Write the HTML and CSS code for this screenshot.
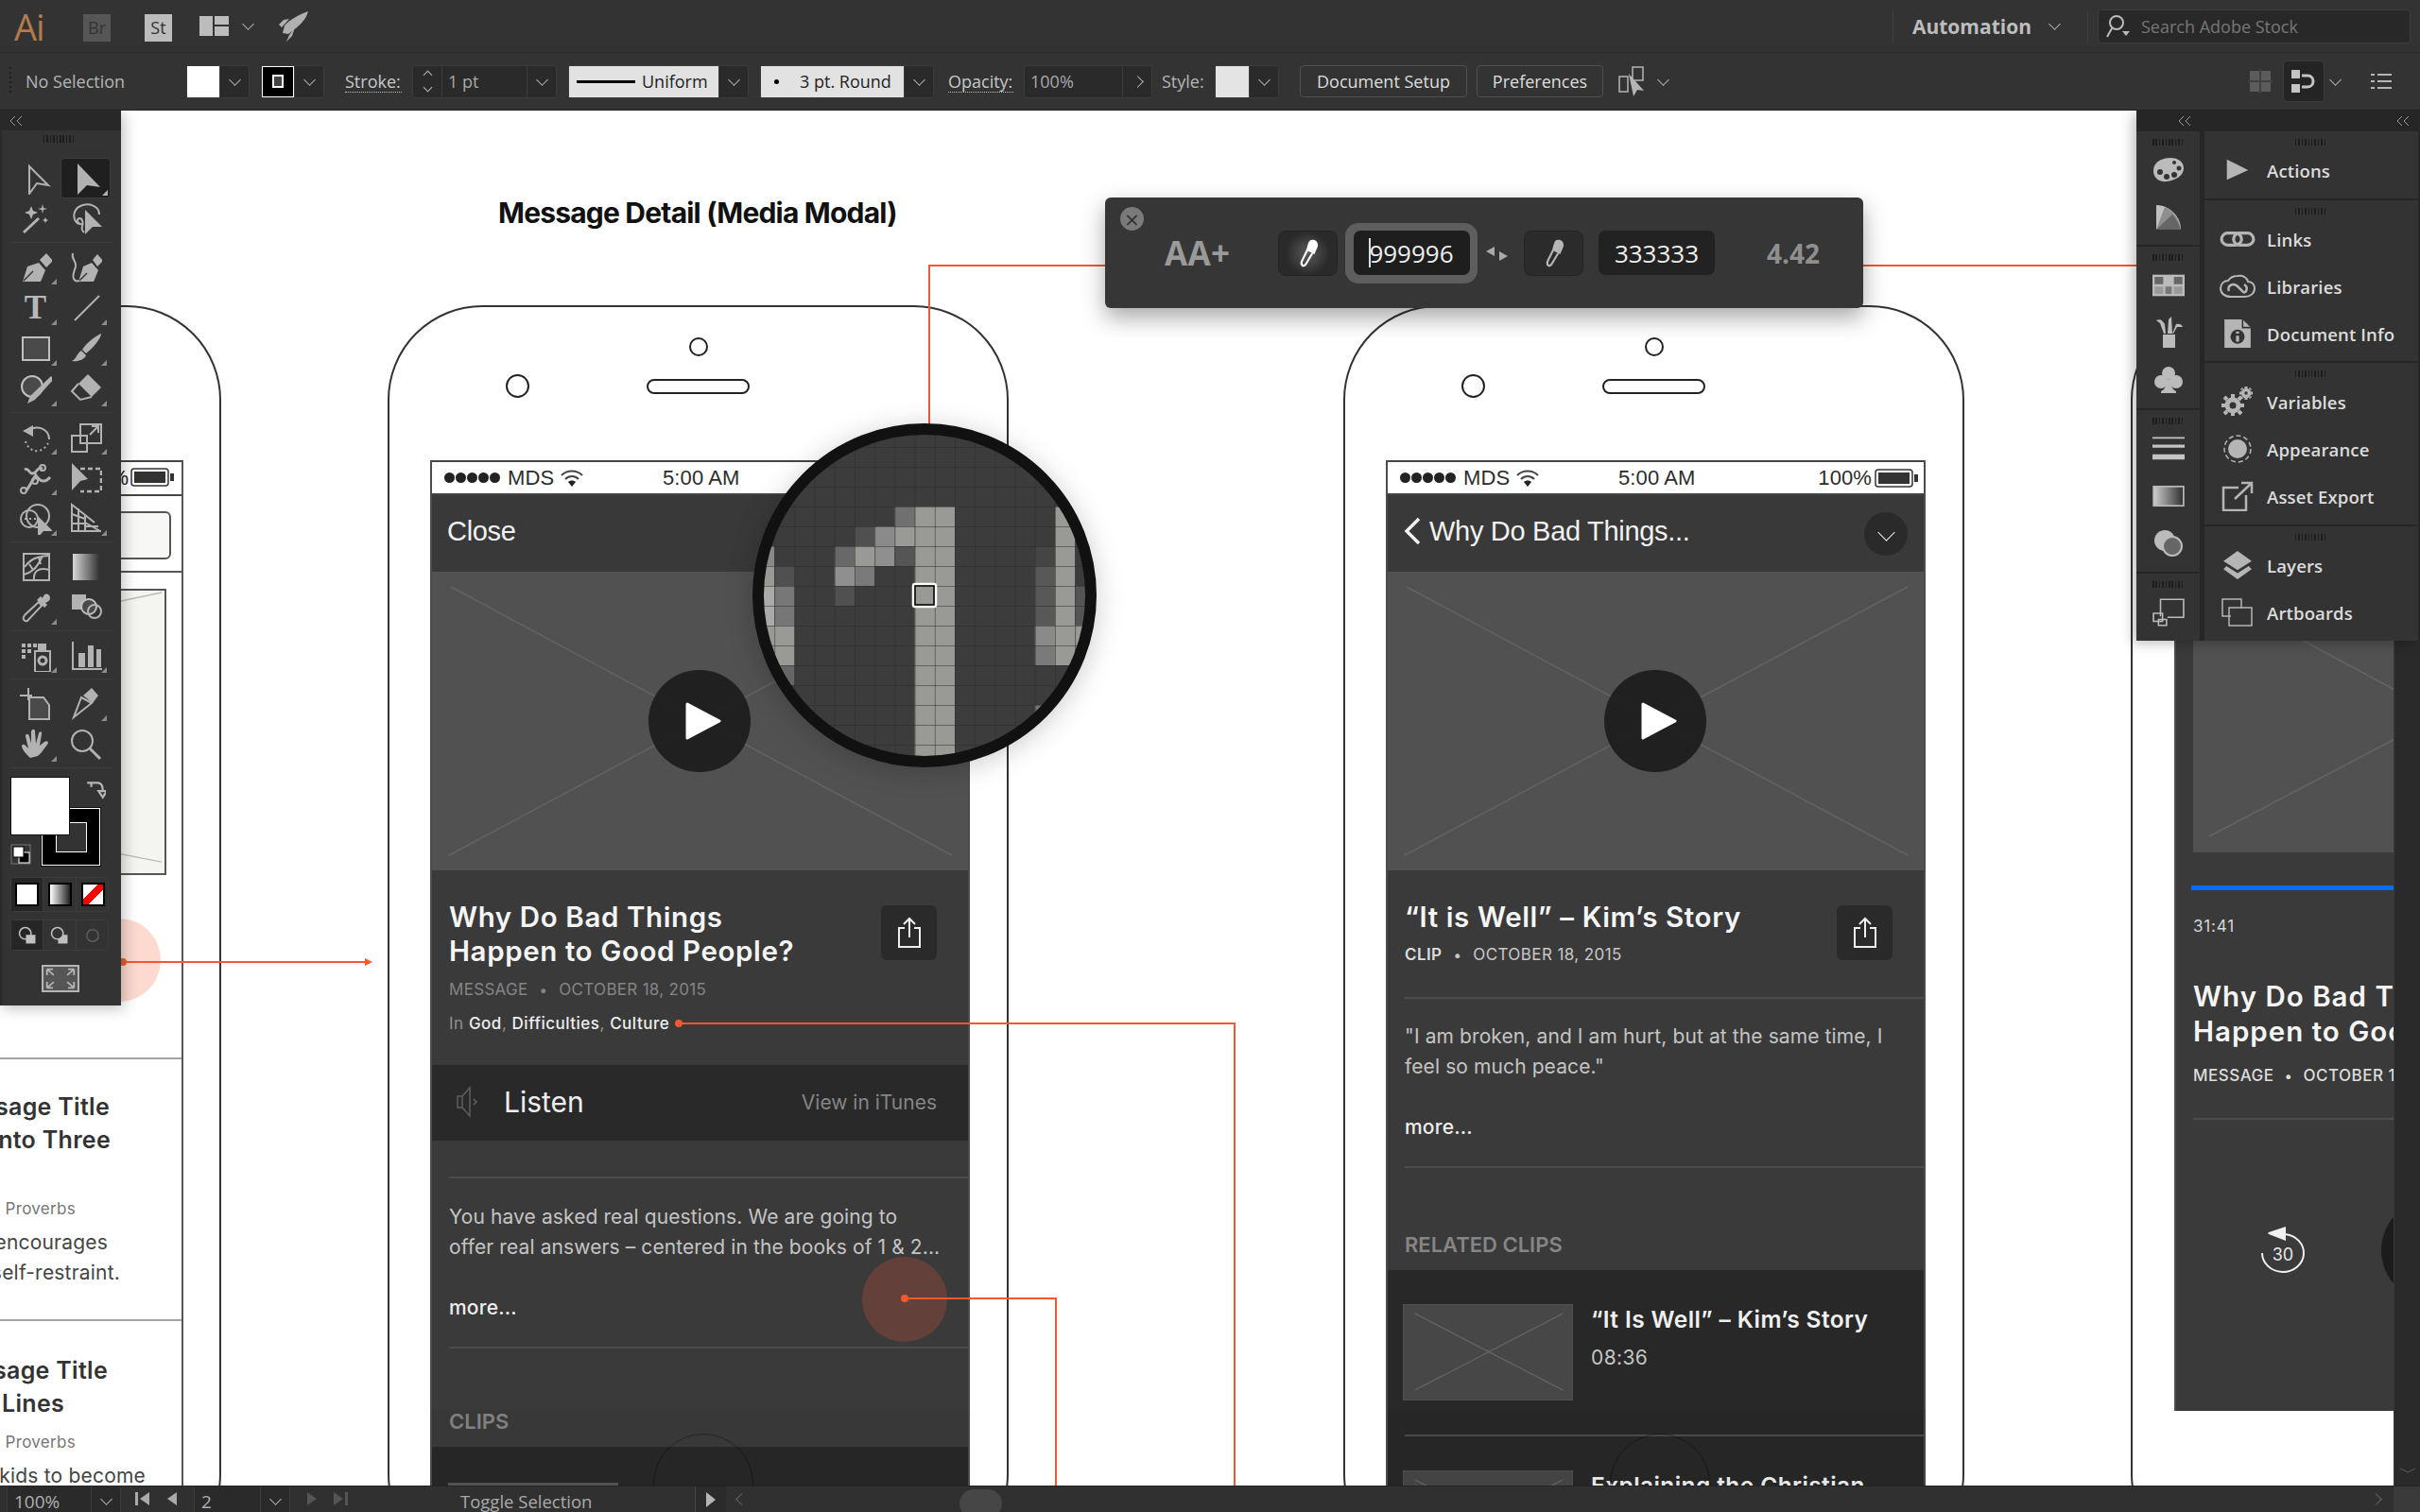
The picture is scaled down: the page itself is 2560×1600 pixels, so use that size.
FILE: index.html
```html
<!DOCTYPE html>
<html lang="en-US">

<head>
    <title>Adobe Illustrator - Message Detail</title>
    <meta charset="utf-8">
    <link rel="stylesheet" href="styles.css">
</head>

<body>
    <header class="appbar">
        <span class="ai-logo">Ai</span>
        <span class="app-badge badge-br">Br</span>
        <span class="app-badge badge-st">St</span>
        <svg class="wsp-icon" viewBox="0 0 31 21"><path d="M0 0h14v21H0zM16 0h15v9H16zM16 11h15v10H16z"/></svg>
        <i class="chev chev-top"></i>
        <svg class="rocket" viewBox="0 0 32 32"><path d="M31 0C22 3 11 9 6 15l-2 8 6 1 9-7C25 12 29 7 31 0zM11 25l-3 7 6-6 3-9-6 8zM0 14l5-5 6-1-8 9z"/></svg>
        <span class="top-sep top-sep-a"></span>
        <span class="workspace">Automation</span>
        <i class="chev chev-work"></i>
        <span class="top-sep top-sep-b"></span>
        <div class="stock-search">
            <svg class="stock-icon" viewBox="0 0 30 30"><circle cx="13" cy="11" r="7"/><path d="M8 17l-5 9"/><path class="solid" d="M19 20h8l-4 5z"/></svg>
            <span>Search Adobe Stock</span>
        </div>
    </header>

    <nav class="optbar">
        <span class="opt-grip"></span>
        <span class="opt-label no-sel">No Selection</span>
        <div class="combo"><span class="swatch swatch-fill"></span><span class="arrow"><i class="chev"></i></span></div>
        <div class="combo ml12"><span class="swatch swatch-stroke"><span></span></span><span class="arrow"><i class="chev"></i></span></div>
        <span class="opt-label dotted ml22 lbl-stroke">Stroke:</span>
        <div class="combo ml11">
            <span class="spinner"><i class="chev up"></i><i class="chev"></i></span>
            <span class="field field-pt">1 pt</span>
            <span class="arrow"><i class="chev"></i></span>
        </div>
        <div class="combo ml12">
            <span class="lightbox lb-uniform"><span class="stroke-line"></span>Uniform</span>
            <span class="arrow"><i class="chev"></i></span>
        </div>
        <div class="combo ml12">
            <span class="lightbox lb-round"><span class="round-dot"></span>3 pt. Round</span>
            <span class="arrow"><i class="chev"></i></span>
        </div>
        <span class="opt-label dotted ml15 lbl-opacity">Opacity:</span>
        <div class="combo ml11">
            <span class="field field-op">100%</span>
            <span class="arrow"><i class="chev chev-right"></i></span>
        </div>
        <span class="opt-label ml10 lbl-style">Style:</span>
        <div class="combo ml10"><span class="swatch swatch-style"></span><span class="arrow"><i class="chev"></i></span></div>
        <button class="opt-btn btn-setup">Document Setup</button>
        <button class="opt-btn btn-prefs">Preferences</button>
        <svg class="transform-icon" viewBox="0 0 34 32"><path class="hollow" d="M2 11h9v16H2zM16 1h11v14H16z"/><path d="M12 8l16 18-7-1-4 7z"/></svg>
        <i class="chev chev-solo"></i>
        <svg class="align-a" viewBox="0 0 26 26"><path d="M2 2h10v10H2zM14 2h10v10H14zM2 14h10v10H2zM14 14h10v10H14z"/><path class="bar" d="M13 0v26M0 13h26"/></svg>
        <span class="align-b">
            <svg viewBox="0 0 26 26"><path d="M0 1h9v9H0zM0 16h9v9H0z"/><path class="bend" d="M11 7h6c4 0 6 3 6 6s-2 6-6 6h-6"/></svg>
        </span>
        <i class="chev chev-align"></i>
        <svg class="list-icon" viewBox="0 0 22 16"><path d="M0 0h4v2H0zM7 0h15v2H7zM0 7h4v2H0zM7 7h15v2H7zM0 14h4v2H0zM7 14h15v2H7z"/></svg>
    </nav>

    <main class="canvas">
        <!-- partial artboard on the left -->
        <div class="phone phone-left"></div>
        <div class="frag">
            <div class="frag-status"><span>%</span>
                <svg class="battery" viewBox="0 0 47 20"><rect x="1" y="1" width="39" height="18" rx="3"/><rect class="cell" x="4" y="4" width="33" height="12"/><rect class="cell" x="42" y="6" width="4" height="8"/></svg>
            </div>
            <div class="frag-input"></div>
            <div class="frag-line"></div>
            <div class="frag-media">
                <svg viewBox="0 0 175 302" preserveAspectRatio="none"><path d="M0 40L172 2M0 255l172 35"/></svg>
            </div>
            <div class="frag-rule rule-a"></div>
            <div class="frag-txt t-title t-a">Message Title</div>
            <div class="frag-txt t-title t-b">Wraps into Three</div>
            <div class="frag-txt t-tag t-c">Proverbs</div>
            <div class="frag-txt t-body t-d">Wisdom encourages</div>
            <div class="frag-txt t-body t-e">us to have self-restraint.</div>
            <div class="frag-rule rule-b"></div>
            <div class="frag-txt t-title t-f">Message Title</div>
            <div class="frag-txt t-title t-g">Two Lines</div>
            <div class="frag-txt t-tag t-h">Proverbs</div>
            <div class="frag-txt t-body t-i">Teaching kids to become</div>
        </div>

        <h1 class="board-title">Message Detail (Media Modal)</h1>

        <!-- phone 1 -->
        <div class="phone phone-one">
            <span class="phone-cam"></span><span class="phone-dot"></span><span class="phone-speaker"></span>
        </div>
        <section class="screen screen-one">
            <div class="status">
                <span class="signal"><i></i><i></i><i></i><i></i><i></i></span>
                <span>MDS</span>
                <svg class="wifi" viewBox="0 0 24 18"><path d="M1 6c6-6 16-6 22 0M5 10c4-4 10-4 14 0"/><path class="solid" d="M12 18l-4-5c2-2 6-2 8 0z"/></svg>
                <span class="clock">5:00 AM</span>
            </div>
            <div class="phonenav"><span class="nav-title">Close</span></div>
            <div class="media">
                <svg class="cross" viewBox="0 0 567 316"><path d="M20 16l530 284M550 16L18 300"/></svg>
                <span class="play"><svg viewBox="0 0 40 42"><path d="M3 3l34 18L3 39z"/></svg></span>
            </div>
            <div class="info info-one">
                <h2 class="msg-title">Why Do Bad Things<br>Happen to Good People?</h2>
                <div class="share"><svg viewBox="0 0 26 34"><path d="M8 12H2v20h22V12h-6M13 22V2M7 8l6-6 6 6"/></svg></div>
                <p class="meta">MESSAGE<span class="dot">&bull;</span>OCTOBER 18, 2015</p>
                <p class="tags">In <b>God</b>, <b>Difficulties</b>, <b>Culture</b></p>
            </div>
            <div class="listen">
                <svg class="speaker" viewBox="0 0 24 34"><path d="M2 11h5v12H2zM7 11L15 2v30l-8-9M19 14l3 3-3 3"/></svg>
                <span class="listen-txt">Listen</span>
                <span class="itunes">View in iTunes</span>
            </div>
            <hr class="rule rule-listen">
            <p class="desc desc-one">You have asked real questions. We are going to<br>offer real answers &ndash; centered in the books of 1 &amp; 2...</p>
            <p class="more-link">more...</p>
            <hr class="rule rule-more">
            <h3 class="section-head head-clips">CLIPS</h3>
            <div class="clips clips-one"><span class="thumb-top"></span></div>
        </section>

        <!-- phone 2 -->
        <div class="phone phone-two">
            <span class="phone-cam"></span><span class="phone-dot"></span><span class="phone-speaker"></span>
        </div>
        <section class="screen screen-two">
            <div class="status">
                <span class="signal"><i></i><i></i><i></i><i></i><i></i></span>
                <span>MDS</span>
                <svg class="wifi" viewBox="0 0 24 18"><path d="M1 6c6-6 16-6 22 0M5 10c4-4 10-4 14 0"/><path class="solid" d="M12 18l-4-5c2-2 6-2 8 0z"/></svg>
                <span class="clock">5:00 AM</span>
                <span class="pct">100%</span>
                <svg class="battery" viewBox="0 0 47 20"><rect x="1" y="1" width="39" height="18" rx="3"/><rect class="cell" x="4" y="4" width="33" height="12"/><rect class="cell" x="42" y="6" width="4" height="8"/></svg>
            </div>
            <div class="phonenav">
                <svg class="back" viewBox="0 0 20 30"><path d="M17 2L4 15l13 13"/></svg>
                <span class="nav-title nav-back">Why Do Bad Things...</span>
                <span class="nav-round"><i class="chev"></i></span>
            </div>
            <div class="media">
                <svg class="cross" viewBox="0 0 567 316"><path d="M20 16l530 284M550 16L18 300"/></svg>
                <span class="play"><svg viewBox="0 0 40 42"><path d="M3 3l34 18L3 39z"/></svg></span>
            </div>
            <div class="info info-two">
                <h2 class="msg-title">&ldquo;It is Well&rdquo; &ndash; Kim&rsquo;s Story</h2>
                <div class="share"><svg viewBox="0 0 26 34"><path d="M8 12H2v20h22V12h-6M13 22V2M7 8l6-6 6 6"/></svg></div>
                <p class="meta meta-light"><b>CLIP</b><span class="dot">&bull;</span>OCTOBER 18, 2015</p>
            </div>
            <hr class="rule rule-info">
            <p class="desc desc-two">"I am broken, and I am hurt, but at the same time, I<br>feel so much peace."</p>
            <p class="more-link">more...</p>
            <hr class="rule rule-more">
            <h3 class="section-head head-related">RELATED CLIPS</h3>
            <div class="clips clips-two">
                <div class="clip-row">
                    <div class="thumb"><svg viewBox="0 0 180 102"><path d="M11 9l160 83M11 92L171 9"/></svg></div>
                    <div>
                        <div class="clip-title">&ldquo;It Is Well&rdquo; &ndash; Kim&rsquo;s Story</div>
                        <div class="clip-time">08:36</div>
                    </div>
                </div>
                <hr class="rule rule-clip">
                <div class="clip-row clip-row-next">
                    <div class="thumb"><svg viewBox="0 0 180 102"><path d="M11 9l160 83M11 92L171 9"/></svg></div>
                    <div>
                        <div class="clip-title">Explaining the Christian</div>
                    </div>
                </div>
            </div>
        </section>
        <span class="fold fold-one"></span>
        <span class="fold fold-two"></span>
        <span class="home home-one"></span>
        <span class="home home-two"></span>

        <!-- phone 3, cut off by the panels -->
        <div class="phone phone-three"></div>
        <section class="screen screen-three">
            <div class="media media-three">
                <svg viewBox="0 0 531 282"><path d="M16 4l499 268M515 4L17 265"/></svg>
            </div>
            <div class="progress"></div>
            <div class="time-now">31:41</div>
            <h2 class="msg-title title-three">Why Do Bad Things<br>Happen to Good People?</h2>
            <p class="meta meta-three"><b>MESSAGE</b><span class="dot">&bull;</span><b>OCTOBER 18, 2015</b></p>
            <hr class="rule rule-three">
            <div class="controls">
                <svg class="back30" viewBox="0 0 48 52"><path d="M2 30a22 20 0 1 0 24-20"/><path class="solid" d="M27 2v15L9 10c-1-1-1-1 0-2z"/><text x="24" y="38">30</text></svg>
                <span class="big-play"></span>
            </div>
        </section>

        <!-- annotation lines -->
        <svg class="notes" viewBox="0 117 2560 1455">
            <circle class="spot" cx="126" cy="1016" r="44"/>
            <circle class="spot-dark" cx="957" cy="1375" r="45"/>
            <path d="M130 1018H388M983 450V281H1169M1971 281H2262M718 1083H1306V1572M957 1374H1117V1572"/>
            <path class="solid" d="M386 1014l8 4-8 4z"/>
            <circle class="solid" cx="130" cy="1018" r="4"/>
            <circle class="solid" cx="718" cy="1083" r="4"/>
            <circle class="solid" cx="957" cy="1374" r="4"/>
        </svg>

        <!-- magnifier -->
        <svg class="loupe" viewBox="796 448 364 364">
            <defs>
                <clipPath id="loupeclip"><circle cx="978" cy="630" r="171"/></clipPath>
                <pattern id="pixgrid" patternUnits="userSpaceOnUse" x="967.6" y="536" width="21.2" height="21">
                    <path d="M21.2 0H0V21" fill="none" stroke="#2a2a2a" stroke-width="1"/>
                </pattern>
            </defs>
            <g clip-path="url(#loupeclip)">
                <rect x="796" y="448" width="364" height="364" fill="#3c3c3c"/>
                <rect x="967.6" y="536" width="42.4" height="290" fill="#999996"/>
                <rect x="946.4" y="536" width="21.2" height="21" fill="#707070"/>
                <rect x="904" y="557" width="21.2" height="21" fill="#505050"/>
                <rect x="925.2" y="557" width="21.2" height="21" fill="#8a8a8a"/>
                <rect x="946.4" y="557" width="21.2" height="21" fill="#999996"/>
                <rect x="882.8" y="578" width="21.2" height="21" fill="#686868"/>
                <rect x="904" y="578" width="21.2" height="21" fill="#999996"/>
                <rect x="925.2" y="578" width="21.2" height="21" fill="#8f8f8f"/>
                <rect x="946.4" y="578" width="21.2" height="21" fill="#555"/>
                <rect x="882.8" y="599" width="21.2" height="21" fill="#8f8f8f"/>
                <rect x="904" y="599" width="21.2" height="21" fill="#7a7a7a"/>
                <rect x="882.8" y="620" width="21.2" height="21" fill="#505050"/>
                <rect x="798" y="578" width="21.2" height="21" fill="#888"/>
                <rect x="798" y="599" width="21.2" height="21" fill="#999996"/>
                <rect x="819.2" y="599" width="21.2" height="21" fill="#505050"/>
                <rect x="798" y="620" width="21.2" height="42" fill="#aaa"/>
                <rect x="819.2" y="620" width="21.2" height="42" fill="#777"/>
                <rect x="798" y="662" width="42.4" height="42" fill="#999996"/>
                <rect x="819.2" y="704" width="21.2" height="21" fill="#666"/>
                <rect x="1116" y="536" width="21.2" height="168" fill="#999996"/>
                <rect x="1094.8" y="578" width="21.2" height="21" fill="#454545"/>
                <rect x="1094.8" y="599" width="21.2" height="63" fill="#585858"/>
                <rect x="1094.8" y="662" width="21.2" height="21" fill="#8a8a8a"/>
                <rect x="1094.8" y="683" width="21.2" height="21" fill="#7a7a7a"/>
                <rect x="1137.2" y="620" width="21.2" height="42" fill="#555"/>
                <rect x="1137.2" y="662" width="21.2" height="42" fill="#999996"/>
                <rect x="1094.8" y="746" width="21.2" height="80" fill="#777"/>
                <rect x="796" y="448" width="364" height="364" fill="url(#pixgrid)"/>
            </g>
            <circle cx="978" cy="630" r="176" fill="none" stroke="#111" stroke-width="12"/>
            <rect x="966" y="618" width="24" height="24" rx="2" fill="#999996" stroke="#fff" stroke-width="2.5"/>
            <rect x="968" y="620" width="20" height="20" fill="none" stroke="#000" stroke-width="1.5"/>
        </svg>

        <!-- contrast panel -->
        <div class="contrast">
            <span class="contrast-close">&times;</span>
            <span class="grade">AA+</span>
            <span class="picker picker-on"><svg viewBox="0 0 20 28"><path class="bulb" d="M8 11l2-7c1-3 3-4 6-3s4 4 3 7l-3 7z"/><path class="tube" d="M9 11L4 21c-1 2-1 4 0 5s3 0 4-2l6-10"/></svg></span>
            <span class="hex-ring"><span class="hex hex-active"><span class="caret"></span>999996</span></span>
            <svg class="swap" viewBox="0 0 27 18"><path d="M11 2v10L2 7zM16 7v10l9-5z"/></svg>
            <span class="picker picker-off"><svg viewBox="0 0 20 28"><path class="bulb" d="M8 11l2-7c1-3 3-4 6-3s4 4 3 7l-3 7z"/><path class="tube" d="M9 11L4 21c-1 2-1 4 0 5s3 0 4-2l6-10"/></svg></span>
            <span class="hex hex-second">333333</span>
            <span class="ratio">4.42</span>
        </div>

        <div class="strip"><i class="chev chev-wide"></i></div>

        <!-- tools panel -->
        <aside class="tools">
            <div class="panel-head"><i class="dbl"></i></div>
            <div class="grip grip-tools"></div>
            <div class="toolgroup">
                <div class="tool"><svg viewBox="0 0 34 34"><path d="M10 4L30 24 18 22 10 33z"/></svg></div>
                <div class="tool tool-on more"><svg viewBox="0 0 34 34"><path class="f" d="M8 1l24 25-14-2-10 10z"/></svg></div>
                <div class="tool"><svg viewBox="0 0 34 34"><path class="f" d="M12 3l2 5 5 2-5 2-2 5-2-5-5-2 5-2zM24 1l1 4 4 1-4 1-1 4-1-4-4-1 4-1zM27 15l1 2 2 1-2 1-1 2-1-2-2-1 2-1z"/><path class="thick" d="M4 31l16-15"/></svg></div>
                <div class="tool"><svg viewBox="0 0 34 34"><path d="M9 22C2 17 3 7 11 3c9-4 20 0 20 9"/><path d="M13 22c-5 1-7-5-3-6 4 0 4 6 3 9-1 2 0 4 2 6"/><path class="f" d="M16 7l18 18-10 0-8 8z"/></svg></div>
            </div>
            <div class="toolgroup">
                <div class="tool more"><svg viewBox="0 0 34 34"><path class="f" d="M3 32l5-16 12-4 7 8-5 12zM21 9l7-7 7 8-7 7z"/><path class="cut" d="M4 31l10-10"/></svg></div>
                <div class="tool"><svg viewBox="0 0 34 34"><path class="f" d="M9 32l5-16 9-4 7 8-5 12zM24 9l5-6 6 7-6 6z"/><path class="cut" d="M10 31l8-8"/><path d="M3 2c-2 6 4 8 3 14-1 5-4 8-2 13 1 2 3 3 6 2"/></svg></div>
                <div class="tool more tool-type">T</div>
                <div class="tool more"><svg viewBox="0 0 34 34"><path d="M5 30L31 4"/></svg></div>
                <div class="tool more"><svg viewBox="0 0 34 34"><rect class="dim" x="3" y="5" width="28" height="24"/></svg></div>
                <div class="tool more"><svg viewBox="0 0 34 34"><path class="f" d="M33 1C33 6 24 17 17 22l-4-4C18 10 28 3 33 1zM12 19l5 5c-2 5-9 7-15 6 5-2 5-8 10-11z"/></svg></div>
                <div class="tool more"><svg viewBox="0 0 34 34"><circle class="dim" cx="13" cy="14" r="11"/><path class="f" d="M33 3l3 3-20 22-8 4 3-8z"/></svg></div>
                <div class="tool more"><svg viewBox="0 0 34 34"><path class="f" d="M19 1l14 14-10 10L9 11z"/><path d="M9 11l-7 8 9 9 12-3"/></svg></div>
            </div>
            <div class="toolgroup">
                <div class="tool more"><svg viewBox="0 0 34 34"><path d="M9 10c8-7 22-3 22 9"/><path class="f" d="M3 10l11-6 0 12z"/><path class="dots" d="M6 21c2 7 8 11 14 10 5-1 8-5 10-8"/></svg></div>
                <div class="tool more"><svg viewBox="0 0 34 34"><rect x="2" y="15" width="16" height="17"/><rect x="11" y="3" width="22" height="20"/><path d="M21 14l8-8M23 5h7v7"/></svg></div>
                <div class="tool more"><svg viewBox="0 0 34 34"><path class="thick" d="M5 8c5-3 4 5 9 4 5-1 4-8 10-5M7 30c4-6 7-12 10-16 4 6 9 9 15 2"/><circle cx="4" cy="30" r="3"/><circle cx="24" cy="6" r="3"/><circle cx="16" cy="20" r="3"/></svg></div>
                <div class="tool"><svg viewBox="0 0 34 34"><path class="f" d="M2 1l17 17-8 2-9 10z"/><path class="dash" d="M11 7h22v24H11"/></svg></div>
                <div class="tool more"><svg viewBox="0 0 34 34"><circle cx="10" cy="17" r="9"/><circle cx="19" cy="14" r="12"/><path class="dots" d="M5 17h15"/><path class="f" d="M19 14l16 16H25l-6 7z"/></svg></div>
                <div class="tool more"><svg viewBox="0 0 34 34"><path d="M2 2l14 11v17H2zM2 12l14 5M2 22h14M9 6v24M16 13l10 8M16 21l16 9M2 30h31M16 25h14"/></svg></div>
            </div>
            <div class="toolgroup">
                <div class="tool"><svg viewBox="0 0 34 34"><rect x="4" y="3" width="27" height="28"/><path d="M5 17C12 8 18 6 30 5M4 25c8-2 14-6 20-20M15 31C14 22 19 17 31 20M10 14l4 6M20 7l2 7"/></svg></div>
                <div class="tool"><svg viewBox="0 0 34 34"><defs><linearGradient id="gtool"><stop offset="0" stop-color="#d8d8d8"/><stop offset="1" stop-color="#333"/></linearGradient></defs><rect x="3" y="3" width="28" height="28" fill="url(#gtool)" class="nostroke"/></svg></div>
                <div class="tool more"><svg viewBox="0 0 34 34"><path d="M20 11L5 25c-3 4 0 7 3 6L23 15z"/><path class="f" d="M18 9l8 8 3-3-2-2c5-2 6-5 4-8-3-3-6-1-7 3l-2-2z"/></svg></div>
                <div class="tool"><svg viewBox="0 0 34 34"><path class="f" d="M2 3h15v8a9 9 0 0 0-5 8H2z"/><circle class="dim" cx="20" cy="16" r="8"/><circle cx="26" cy="21" r="7"/></svg></div>
            </div>
            <div class="toolgroup">
                <div class="tool more"><svg viewBox="0 0 34 34"><path class="f" d="M2 4h4v4H2zM8 4h4v4H8zM14 4h4v4h-4zM2 10h4v4H2zM8 10h4v4H8zM2 16h4v4H2z"/><path d="M16 12h16v22H16z"/><path class="f" d="M19 4h9v8h-9z"/><circle class="thick" cx="24" cy="22" r="4"/></svg></div>
                <div class="tool more"><svg viewBox="0 0 34 34"><path d="M3 2v29h31"/><path class="f" d="M9 14h7v15H9zM19 6h6v23h-6zM28 10h5v19h-5z"/></svg></div>
            </div>
            <div class="toolgroup">
                <div class="tool"><svg viewBox="0 0 34 34"><path d="M0 8h13M9 0v13"/><path class="darkfill" d="M10 10h15l6 8v15H10z"/></svg></div>
                <div class="tool more"><svg viewBox="0 0 34 34"><path d="M4 31l8-21 11 6z"/><path class="f" d="M14 8l9-8 7 8-6 8z"/></svg></div>
                <div class="tool more"><svg viewBox="0 0 34 34"><path class="f" d="M11 31C6 26 2 22 2 18c2-3 4 0 7 3L6 8c0-3 3-3 4 0l2 8L12 3c1-3 4-3 4 0l1 13 3-11c1-3 4-2 3 1l-2 12 5-4c3-2 5 0 3 3-4 5-7 10-10 12z"/></svg></div>
                <div class="tool"><svg viewBox="0 0 34 34"><circle cx="13" cy="13" r="11"/><path class="thick" d="M21 21l11 11"/></svg></div>
            </div>
            <div class="colors">
                <span class="big-fill"></span>
                <span class="big-stroke"><span></span></span>
                <svg class="color-swap" viewBox="0 0 20 20"><path d="M2 3h4v4M6 3h6c4 0 5 3 5 7M13 11h8l-4 6z"/></svg>
                <svg class="color-default" viewBox="0 0 22 22"><rect x="1" y="1" width="20" height="20" fill="#333" stroke="#777"/><rect x="9" y="9" width="11" height="11" fill="#000" stroke="#fff"/><rect x="3" y="3" width="11" height="11" fill="#fff" stroke="#000"/></svg>
            </div>
            <div class="moderow mode-color">
                <span class="modecell modecell-on"><span class="mode-chip chip-white"></span></span>
                <span class="modecell"><span class="mode-chip chip-grad"></span></span>
                <span class="modecell"><span class="mode-chip chip-none"></span></span>
            </div>
            <div class="moderow mode-draw">
                <span class="modecell modecell-on"><svg viewBox="0 0 26 26"><circle cx="10" cy="10" r="8"/><rect class="f" x="11" y="12" width="13" height="12"/></svg></span>
                <span class="modecell"><svg viewBox="0 0 26 26"><rect class="f" x="11" y="12" width="13" height="12"/><circle class="dk" cx="10" cy="10" r="8"/></svg></span>
                <span class="modecell modecell-dim"><svg viewBox="0 0 26 26"><circle cx="13" cy="13" r="8"/></svg></span>
            </div>
            <div class="screenmode"><svg viewBox="0 0 40 28"><path d="M4 3l8 7M4 3h7M4 3v7M36 3l-8 7M36 3h-7M36 3v7M4 25l8-7M4 25h7M4 25v-7M36 25l-8-7M36 25h-7M36 25v-7"/></svg></div>
        </aside>

        <!-- docked panels -->
        <aside class="docks">
            <div class="dock-head"><i class="dbl dbl-a"></i><i class="dbl dbl-b"></i></div>
            <div class="dock-cols">
                <div class="dock-col col-icons">
                    <div class="dgroup dg-a">
                        <div class="grip"></div>
                        <div class="dicon di-first"><svg viewBox="0 0 36 30"><path d="M2 16C2 6 12 2 20 2c8 0 14 4 14 11 0 8-9 13-18 14C8 28 2 23 2 16z" fill="#bbb"/><circle cx="9" cy="17" r="3" fill="#333"/><circle cx="16" cy="22" r="3" fill="#333"/><circle cx="24" cy="20" r="3" fill="#333"/><circle cx="29" cy="13" r="2.5" fill="#333"/><circle cx="24" cy="7" r="2" fill="#333"/></svg></div>
                        <div class="dicon di-fan"><svg viewBox="0 0 30 30"><path d="M2 2C16 2 28 14 28 28H2z" fill="#c0c0c0"/><path d="M2 28L11 4C20 8 26 16 28 28z" fill="#8e8e8e"/><path d="M2 28L19 12c4 4 7 10 9 16z" fill="#666"/></svg></div>
                    </div>
                    <div class="dgroup dg-b">
                        <div class="grip"></div>
                        <div class="dicon di-swatch"><svg viewBox="0 0 30 20"><rect width="30" height="20" fill="#bbb"/><path d="M2 2h8v7H2zM20 2h8v7h-8z" fill="#666"/><path d="M12 11h6v7h-6z" fill="#777"/><path d="M2 11h8v7H2zM20 11h8v7h-8z" fill="#999"/></svg></div>
                        <div class="dicon di-next"><svg viewBox="0 0 30 36"><path d="M9 20h13v14H9z" fill="#bbb"/><path d="M10 19L6 8 2 5c4-2 7 0 9 4l1 10zM14 19l1-15 3-3 1 18zM19 19l4-10c3-1 6 0 7 3l-6 0-4 7z" fill="#bbb"/></svg></div>
                        <div class="dicon di-club"><svg viewBox="0 0 30 30"><circle cx="15" cy="8" r="7" fill="#bbb"/><circle cx="7" cy="17" r="7" fill="#bbb"/><circle cx="23" cy="17" r="7" fill="#bbb"/><path d="M13 15h4c0 6 2 10 6 12v2H7v-2c4-2 6-6 6-12z" fill="#bbb"/></svg></div>
                    </div>
                    <div class="dgroup dg-c">
                        <div class="grip"></div>
                        <div class="dicon di-swatch"><svg viewBox="0 0 30 22"><path d="M0 0h30v1.5H0zM0 7h30v3H0zM0 16h30v5H0z" fill="#c4c4c4"/></svg></div>
                        <div class="dicon di-grad"><svg viewBox="0 0 30 20"><defs><linearGradient id="gpanel"><stop offset="0" stop-color="#cfcfcf"/><stop offset="1" stop-color="#2e2e2e"/></linearGradient></defs><rect x="1" y="1" width="28" height="18" fill="url(#gpanel)" stroke="#bbb" stroke-width="1.5"/></svg></div>
                        <div class="dicon di-trans"><svg viewBox="0 0 32 30"><circle cx="12" cy="12" r="11" fill="#bbb"/><circle cx="20" cy="18" r="10" fill="#666" stroke="#bbb" stroke-width="2"/></svg></div>
                    </div>
                    <div class="dgroup dg-d">
                        <div class="grip"></div>
                        <div class="dicon di-art"><svg viewBox="0 0 32 28" fill="none" stroke="#bbb" stroke-width="1.5"><path d="M8 18V1h23v18H15"/><path d="M1 15h9v8H1zM6 21h8v6H6z"/></svg></div>
                    </div>
                </div>
                <div class="dock-col col-named">
                    <div class="dgroup dn-a">
                        <div class="grip"></div>
                        <div class="ditem ditem-first"><svg viewBox="0 0 34 34"><path class="f" d="M5 5l24 12L5 28z"/></svg><span>Actions</span></div>
                    </div>
                    <div class="dgroup dn-b">
                        <div class="grip"></div>
                        <div class="ditem ditem-first"><svg viewBox="0 0 36 20"><rect x="2" y="4" width="20" height="12" rx="6" stroke-width="3"/><rect x="14" y="4" width="20" height="12" rx="6" stroke-width="3"/></svg><span>Links</span></div>
                        <div class="ditem"><svg viewBox="0 0 38 26"><path d="M19 2c6-1 10 2 11 6 5 0 7 4 7 7 0 5-4 9-10 9H12C5 24 1 20 1 15c0-5 4-8 8-8 2-3 6-5 10-5z" stroke-width="2"/><path d="M10 18c-3-6 5-9 9-5l6 6c3 2 6-5 1-8" stroke-width="2.5"/></svg><span>Libraries</span></div>
                        <div class="ditem"><svg viewBox="0 0 28 30"><path class="f" d="M1 1h18l8 8v20H1z"/><path class="cut-in" d="M19 1v8h8"/><circle cx="14" cy="18" r="7" fill="#333" stroke="none"/><path class="info-i" d="M14 17v6M14 13v2"/></svg><span>Document Info</span></div>
                    </div>
                    <div class="dgroup dn-c">
                        <div class="grip"></div>
                        <div class="ditem ditem-first"><svg viewBox="0 0 34 32"><circle cx="12" cy="20" r="6" stroke-width="5"/><path d="M12 8v4M12 28v3M3 11l3 3M21 11l-3 3M0 20h4M24 20h-4M3 29l3-3M21 29l-3-3" stroke-width="4"/><circle cx="26" cy="7" r="3.5" stroke-width="3.5"/><path d="M26 0v2M26 12v2M19 7h2M31 7h2M21 2l1 1M31 2l-1 1M21 12l1-1M31 12l-1-1" stroke-width="3"/></svg><span>Variables</span></div>
                        <div class="ditem"><svg viewBox="0 0 32 32"><circle class="f" cx="16" cy="16" r="10"/><circle cx="16" cy="16" r="14" stroke-dasharray="5 3" stroke-width="1.5"/></svg><span>Appearance</span></div>
                        <div class="ditem"><svg viewBox="0 0 34 32"><path d="M18 7H2v24h24V15M14 19L32 2M21 2h11v11" stroke-width="2.5"/></svg><span>Asset Export</span></div>
                    </div>
                    <div class="dgroup dn-d">
                        <div class="grip"></div>
                        <div class="ditem ditem-first"><svg viewBox="0 0 32 30"><path class="f" d="M16 1l14 10-14 9L2 11z"/><path class="f" d="M5 16l11 7 11-7 3 3-14 10L2 19z"/></svg><span>Layers</span></div>
                        <div class="ditem"><svg viewBox="0 0 34 32"><path d="M10 20H1V2h20v10M8 11h24v19H8z" stroke-width="1.5"/></svg><span>Artboards</span></div>
                    </div>
                </div>
            </div>
        </aside>
    </main>

    <footer class="statusbar">
        <div class="combo zoom-combo"><span class="field">100%</span><span class="arrow"><i class="chev"></i></span></div>
        <svg class="pager pg-first" viewBox="0 0 16 16"><path d="M0 1h3v14H0zM15 1v14L5 8z"/></svg>
        <svg class="pager pg-prev" viewBox="0 0 10 16"><path d="M10 1v14L0 8z"/></svg>
        <div class="combo page-combo"><span class="field">2</span><span class="arrow"><i class="chev"></i></span></div>
        <svg class="pager pg-next" viewBox="0 0 10 16"><path d="M0 1v14l10-7z"/></svg>
        <svg class="pager pg-last" viewBox="0 0 16 16"><path d="M16 1h-3v14h3zM1 1v14l10-7z"/></svg>
        <span class="toggle-sel">Toggle Selection</span>
        <span class="toggle-play"><svg viewBox="0 0 10 16"><path d="M0 0v16l10-8z"/></svg></span>
        <i class="chev chev-left"></i>
        <span class="h-thumb"></span>
        <i class="chev chev-right chev-end"></i>
        <span class="corner"></span>
    </footer>
</body>

</html>
```
FILE: styles.css
```css
* {
    box-sizing: border-box;
}

html,
body {
    margin: 0;
    height: 100%;
    overflow: hidden;
}

body {
    width: 2560px;
    height: 1600px;
    display: flex;
    flex-direction: column;
    font-family: "Open Sans", "Liberation Sans", sans-serif;
    background: #333;
    color: #bbb;
}

h1,
h2,
h3,
p {
    margin: 0;
}

i {
    display: block;
    font-style: normal;
}

/* shared chevron */
.chev {
    width: 9px;
    height: 9px;
    border-right: 1.6px solid #b5b5b5;
    border-bottom: 1.6px solid #b5b5b5;
    transform: translateY(-2px) rotate(45deg);
    flex: none;
}

.chev.up {
    transform: translateY(2px) rotate(225deg);
}

.chev-right {
    transform: rotate(-45deg);
}

/* app bar */
.appbar {
    height: 56px;
    flex: none;
    display: flex;
    align-items: center;
    background: #333;
    border-bottom: 1px solid #282828;
    position: relative;
}

.ai-logo {
    margin-left: 15px;
    width: 50px;
    font-size: 38px;
    color: #b47b4e;
    font-weight: 400;
    letter-spacing: -1px;
}

.app-badge {
    width: 29px;
    height: 29px;
    margin-top: 3px;
    display: flex;
    align-items: center;
    justify-content: center;
    font-size: 18px;
    color: #333;
}

.badge-br {
    margin-left: 23px;
    background: #565656;
}

.badge-st {
    margin-left: 36px;
    background: #bcbcbc;
}

.wsp-icon {
    margin-left: 29px;
    width: 31px;
    height: 21px;
    fill: #bcbcbc;
}

.chev-top {
    margin-left: 16px;
}

.rocket {
    margin-left: 28px;
    width: 32px;
    height: 32px;
    fill: #b0b0b0;
}

.top-sep {
    width: 1px;
    height: 34px;
    background: #3f3f3f;
}

.top-sep-a {
    margin-left: auto;
}

.workspace {
    margin-left: 20px;
    font-size: 21px;
    font-weight: 700;
    color: #bdbdbd;
}

.chev-work {
    margin-left: 20px;
    margin-right: 30px;
}

.stock-search {
    width: 331px;
    height: 36px;
    margin-left: 10px;
    margin-right: 10px;
    display: flex;
    align-items: center;
    background: #282828;
    border: 1px solid #3e3e3e;
    border-radius: 4px;
    font-size: 18px;
    color: #767676;
}

.stock-icon {
    width: 30px;
    height: 30px;
    margin: 0 9px 0 6px;
    fill: none;
    stroke: #bbb;
    stroke-width: 2;
}

.stock-icon .solid {
    fill: #bbb;
    stroke: none;
}

/* options bar */
.optbar {
    height: 61px;
    flex: none;
    display: flex;
    align-items: center;
    background: #333;
    border-bottom: 1px solid #222;
    font-size: 18px;
}

.opt-grip {
    width: 2px;
    height: 30px;
    margin-left: 10px;
    background: repeating-linear-gradient(180deg, #1f1f1f 0 2px, transparent 2px 5px);
}

.opt-label {
    color: #b5b5b5;
    white-space: nowrap;
}

.no-sel {
    width: 185px;
    padding-left: 15px;
}

.dotted {
    border-bottom: 1px dotted #bbb;
    line-height: 22px;
    color: #c8c8c8;
}

.lbl-stroke {
    width: 60px;
}

.lbl-opacity {
    width: 69px;
}

.lbl-style {
    width: 46px;
}

.ml10 {
    margin-left: 10px;
}

.ml11 {
    margin-left: 11px;
}

.ml12 {
    margin-left: 12px;
}

.ml15 {
    margin-left: 15px;
}

.ml22 {
    margin-left: 22px;
}

.combo {
    height: 35px;
    display: flex;
    flex: none;
    background: #2a2a2a;
    border: 1px solid #3c3c3c;
    border-radius: 3px;
}

.arrow {
    width: 31px;
    display: flex;
    align-items: center;
    justify-content: center;
    border-left: 1px solid #3c3c3c;
}

.swatch {
    width: 34px;
    background: #fff;
}

.swatch-stroke {
    background: #000;
    border: 1px solid #fff;
    display: flex;
    align-items: center;
    justify-content: center;
}

.swatch-stroke span {
    width: 12px;
    height: 14px;
    border: 2px solid #fff;
    outline: 1px solid #000;
    background: #444;
}

.swatch-style {
    width: 35px;
    background: #e4e4e4;
}

.spinner {
    width: 31px;
    display: flex;
    flex-direction: column;
    align-items: center;
    justify-content: space-around;
    border-right: 1px solid #3c3c3c;
}

.spinner .chev {
    width: 7px;
    height: 7px;
}

.field {
    display: flex;
    align-items: center;
    padding-left: 6px;
    color: #a8a8a8;
}

.field-pt {
    width: 89px;
}

.field-op {
    width: 103px;
    padding-left: 6px;
}

.lightbox {
    display: flex;
    align-items: center;
    background: #e2e2e2;
    color: #222;
    font-size: 18px;
    white-space: nowrap;
}

.lb-uniform {
    width: 158px;
    padding-left: 8px;
}

.stroke-line {
    width: 62px;
    height: 3px;
    margin-right: 7px;
    background: #000;
}

.lb-round {
    width: 151px;
    padding-left: 14px;
}

.round-dot {
    width: 5px;
    height: 5px;
    border-radius: 50%;
    margin-right: 22px;
    background: #000;
}

.opt-btn {
    height: 34px;
    padding: 0;
    background: #333;
    border: 1px solid #505050;
    border-radius: 4px;
    font: 18px "Open Sans", sans-serif;
    color: #ddd;
}

.btn-setup {
    width: 177px;
    margin-left: 22px;
}

.btn-prefs {
    width: 134px;
    margin-left: 10px;
}

.transform-icon {
    width: 34px;
    height: 32px;
    margin-left: 15px;
    fill: #b5b5b5;
}

.transform-icon .hollow {
    fill: none;
    stroke: #b5b5b5;
    stroke-width: 1.5;
}

.chev-solo {
    margin-left: 10px;
}

.align-a {
    width: 26px;
    height: 26px;
    margin-left: auto;
    fill: #5c5c5c;
}

.align-a .bar {
    fill: none;
    stroke: #464646;
    stroke-width: 1.5;
}

.align-b {
    width: 44px;
    height: 44px;
    margin-left: 11px;
    display: flex;
    align-items: center;
    justify-content: center;
    background: #242424;
    border: 1px solid #3c3c3c;
    border-radius: 4px;
}

.align-b svg {
    width: 26px;
    height: 26px;
    fill: #c4c4c4;
}

.align-b .bend {
    fill: none;
    stroke: #c4c4c4;
    stroke-width: 3;
}

.chev-align {
    margin-left: 7px;
}

.list-icon {
    width: 22px;
    height: 16px;
    margin-left: 33px;
    margin-right: 30px;
    fill: #b5b5b5;
}

/* canvas */
.canvas {
    flex: 1;
    position: relative;
    overflow: hidden;
    background: #fff;
}

.board-title {
    position: absolute;
    left: 527px;
    top: 90px;
    font: 700 30px/36px Inter, sans-serif;
    letter-spacing: -.8px;
    color: #111;
    white-space: nowrap;
}

.phone {
    position: absolute;
    top: 206px;
    height: 1337px;
    border: 2px solid #333;
    border-radius: 100px;
    background: #fff;
}

.phone-left {
    left: -200px;
    width: 434px;
}

.phone-one {
    left: 410px;
    width: 657px;
}

.phone-two {
    left: 1421px;
    width: 657px;
}

.phone-three {
    left: 2254px;
    width: 657px;
}

.phone-cam,
.phone-dot,
.phone-speaker {
    position: absolute;
    border: 2px solid #222;
}

.phone-cam {
    left: 317px;
    top: 32px;
    width: 20px;
    height: 20px;
    border-radius: 50%;
}

.phone-dot {
    left: 123px;
    top: 71px;
    width: 25px;
    height: 25px;
    border-radius: 50%;
}

.phone-speaker {
    left: 272px;
    top: 76px;
    width: 109px;
    height: 16px;
    border-radius: 8px;
}

.screen {
    position: absolute;
    top: 370px;
    width: 571px;
    height: 1200px;
    display: flex;
    flex-direction: column;
    background: #3a3a3a;
    border-left: 2px solid #4c4c4c;
    border-right: 2px solid #4c4c4c;
    font-family: Inter, sans-serif;
    overflow: hidden;
}

.screen-one {
    left: 455px;
}

.screen-two {
    left: 1466px;
}

.status {
    height: 37px;
    flex: none;
    display: flex;
    align-items: center;
    padding-left: 13px;
    background: #fff;
    border-top: 2px solid #444;
    border-bottom: 2px solid #444;
    border-left: 0;
    font: 22px "Liberation Sans", sans-serif;
    letter-spacing: .1px;
    color: #2c2c2c;
    position: relative;
}

.signal {
    display: flex;
    gap: 1px;
    margin-right: 8px;
}

.signal i {
    width: 11px;
    height: 11px;
    border-radius: 50%;
    background: #222;
}

.wifi {
    width: 24px;
    height: 18px;
    margin-left: 7px;
    fill: none;
    stroke: #444;
    stroke-width: 2;
}

.wifi .solid {
    fill: #222;
    stroke: none;
}

.clock {
    position: absolute;
    left: 244px;
}

.pct {
    position: absolute;
    right: 55px;
}

.battery {
    position: absolute;
    right: 5px;
    top: 7px;
    width: 47px;
    height: 20px;
    fill: none;
    stroke: #333;
    stroke-width: 1.5;
}

.battery .cell {
    fill: #333;
    stroke: none;
}

.phonenav {
    height: 81px;
    flex: none;
    display: flex;
    align-items: center;
    padding-left: 16px;
    padding-bottom: 5px;
    background: #393939;
    position: relative;
}

.nav-title {
    font: 29px/40px "Liberation Sans", sans-serif;
    color: #f2f2f2;
    letter-spacing: -.3px;
}

.back {
    width: 20px;
    height: 30px;
    margin-right: 8px;
    fill: none;
    stroke: #f2f2f2;
    stroke-width: 3.4;
}

.nav-round {
    position: absolute;
    right: 17px;
    top: 18px;
    width: 46px;
    height: 46px;
    display: flex;
    align-items: center;
    justify-content: center;
    border-radius: 50%;
    background: #2a2a2a;
}

.nav-round .chev {
    width: 13px;
    height: 13px;
    border-color: #eee;
}

.media {
    height: 316px;
    flex: none;
    position: relative;
    display: flex;
    align-items: center;
    justify-content: center;
    background: #515151;
    padding-right: 2px;
}

.cross {
    position: absolute;
    inset: 0;
    width: 100%;
    height: 100%;
    fill: none;
    stroke: #636363;
    stroke-width: 1.5;
}

.play {
    position: relative;
    width: 108px;
    height: 108px;
    display: flex;
    align-items: center;
    justify-content: center;
    border-radius: 50%;
    background: rgba(25, 25, 25, .88);
}

.play svg {
    width: 40px;
    height: 42px;
    margin-left: 8px;
    fill: #fff;
    stroke: #fff;
    stroke-width: 3;
    stroke-linejoin: round;
}

.info {
    position: relative;
    flex: none;
    padding: 32px 18px 0;
}

.msg-title {
    font: 600 29.5px/35.5px Inter, sans-serif;
    letter-spacing: .6px;
    color: #f5f5f5;
    white-space: nowrap;
}

.share {
    position: absolute;
    top: 37px;
    right: 33px;
    width: 59px;
    height: 58px;
    display: flex;
    align-items: center;
    justify-content: center;
    background: #2a2a2a;
    border-radius: 6px;
}

.share svg {
    width: 26px;
    height: 34px;
    fill: none;
    stroke: #eee;
    stroke-width: 2;
}

.meta {
    margin-top: 13px;
    font: 17px/20px Inter, sans-serif;
    letter-spacing: .3px;
    color: #858585;
    white-space: nowrap;
}

.meta .dot {
    margin: 0 12px;
    font-size: 15px;
}

.meta-light {
    margin-top: 11px;
    color: #c8c8c8;
    letter-spacing: .4px;
}

.meta-light b {
    font-weight: 600;
    color: #ddd;
}

.tags {
    margin-top: 15px;
    padding-bottom: 34px;
    font: 17px/20px Inter, sans-serif;
    letter-spacing: .5px;
    color: #919191;
}

.tags b {
    font-weight: 500;
    color: #eee;
}

.listen {
    height: 80px;
    flex: none;
    display: flex;
    align-items: center;
    background: #292929;
    padding-left: 25px;
    padding-bottom: 2px;
}

.speaker {
    width: 24px;
    height: 34px;
    fill: none;
    stroke: #5e5e5e;
    stroke-width: 1.5;
}

.listen-txt {
    margin-left: 27px;
    font-size: 30px;
    color: #eee;
}

.itunes {
    margin-left: auto;
    margin-right: 33px;
    font-size: 21px;
    color: #858585;
}

.rule {
    flex: none;
    height: 2px;
    margin: 0 0 0 18px;
    border: 0;
    background: #4c4c4c;
}

.rule-listen {
    margin-top: 38px;
}

.desc {
    flex: none;
    padding: 25px 18px 0;
    font: 21px/32px Inter, sans-serif;
    letter-spacing: .1px;
    color: #c4c4c4;
    white-space: nowrap;
}

.more-link {
    margin-top: 34px;
    padding-left: 18px;
    flex: none;
    font: 500 21px/28px Inter, sans-serif;
    letter-spacing: .2px;
    color: #eee;
}

.rule-more {
    margin-top: 27px;
}

.section-head {
    flex: none;
    padding-left: 18px;
    font: 600 22px/26px Inter, sans-serif;
    color: #858585;
}

.head-clips {
    margin-top: 64px;
}

.head-related {
    margin-top: 68px;
}

.clips {
    flex: 1;
    margin-top: 14px;
    background: #282828;
}

.thumb-top {
    display: block;
    width: 180px;
    height: 10px;
    margin: 38px 0 0 17px;
    background: #555;
}

.rule-info {
    margin-top: 34px;
}

.desc-two {
    padding-top: 24px;
}

.clips-two {
    padding-top: 36px;
}

.clip-row {
    display: flex;
    gap: 19px;
    padding-left: 16px;
}

.thumb {
    width: 180px;
    height: 102px;
    flex: none;
    background: #474747;
    border: 1px solid #4f4f4f;
}

.thumb svg {
    display: block;
    width: 100%;
    height: 100%;
    fill: none;
    stroke: #616161;
    stroke-width: 1.5;
}

.clip-title {
    margin-top: 2px;
    font: 600 24.5px/28px Inter, sans-serif;
    letter-spacing: .4px;
    color: #f0f0f0;
}

.clip-time {
    margin-top: 14px;
    font: 21px/26px Inter, sans-serif;
    letter-spacing: .4px;
    color: #c4c4c4;
}

.rule-clip {
    margin-top: 36px;
}

.clip-row-next {
    margin-top: 36px;
}

.fold {
    position: absolute;
    top: 1375px;
    width: 571px;
    height: 80px;
    background: rgba(0, 0, 0, .03);
}

.fold-one {
    left: 455px;
}

.fold-two {
    left: 1467px;
}

.home {
    position: absolute;
    top: 1400px;
    width: 106px;
    height: 106px;
    border: 1.5px solid rgba(0, 0, 0, .35);
    border-radius: 50%;
}

.home-one {
    left: 691px;
}

.home-two {
    left: 1703px;
}

/* phone 3 */
.screen-three {
    left: 2300px;
    height: 1006px;
    padding-top: 133px;
    padding-left: 18px;
    border-right: 0;
}

.media-three {
    width: 531px;
    height: 282px;
    padding: 0;
}

.media-three svg {
    width: 100%;
    height: 100%;
    fill: none;
    stroke: #646464;
    stroke-width: 1.5;
}

.progress {
    height: 5px;
    margin: 35px 0 0 -2px;
    background: #0a6cff;
    flex: none;
}

.time-now {
    margin-top: 28px;
    font: 17px/20px Inter, sans-serif;
    letter-spacing: .8px;
    color: #d5d5d5;
}

.title-three {
    margin-top: 46px;
    line-height: 37px;
    letter-spacing: 1px;
}

.meta-three {
    margin-top: 18px;
    color: #ddd;
    letter-spacing: .5px;
}

.meta-three b {
    font-weight: 500;
}

.meta-three .dot {
    margin: 0 11px;
}

.rule-three {
    margin: 34px 0 0;
}

.controls {
    position: relative;
    height: 120px;
    margin-top: 80px;
    flex: none;
}

.back30 {
    position: absolute;
    left: 71px;
    top: 31px;
    width: 48px;
    height: 52px;
    fill: none;
    stroke: #f0f0f0;
    stroke-width: 2;
}

.back30 .solid {
    fill: #f0f0f0;
    stroke: none;
}

.back30 text {
    font: 18px Inter, sans-serif;
    text-anchor: middle;
    fill: #e8e8e8;
    stroke: none;
}

.big-play {
    position: absolute;
    left: 199px;
    top: 4px;
    width: 108px;
    height: 108px;
    border-radius: 50%;
    background: #1c1c1c;
}

/* fragment of the left artboard */
.frag {
    position: absolute;
    left: -10px;
    top: 370px;
    width: 204px;
    height: 1090px;
    border-right: 2px solid #555;
    border-top: 2px solid #444;
    overflow: hidden;
}

.frag-status {
    height: 36px;
    display: flex;
    align-items: center;
    justify-content: flex-end;
    padding-right: 56px;
    border-bottom: 2px solid #444;
    font: 22px "Liberation Sans", sans-serif;
    color: #222;
    position: relative;
}

.frag .battery {
    right: 7px;
    top: 6px;
}

.frag-input {
    position: absolute;
    right: 11px;
    top: 52px;
    width: 150px;
    height: 51px;
    background: #f7f7f5;
    border: 2px solid #555;
    border-radius: 6px;
}

.frag-line {
    position: absolute;
    left: 0;
    right: 0;
    top: 115px;
    height: 2px;
    background: #555;
}

.frag-media {
    position: absolute;
    left: 0;
    top: 134px;
    width: 186px;
    height: 303px;
    background: #f4f4f1;
    border: 2px solid #555;
}

.frag-media svg {
    width: 100%;
    height: 100%;
    display: block;
    fill: none;
    stroke: #bbb;
    stroke-width: 1.5;
}

.frag-rule {
    position: absolute;
    left: 0;
    right: 0;
    height: 2px;
    background: #a5a5a5;
}

.rule-a {
    top: 630px;
}

.rule-b {
    top: 907px;
}

.frag-txt {
    position: absolute;
    white-space: nowrap;
    font-family: Inter, sans-serif;
}

.t-title {
    font-weight: 600;
    font-size: 25px;
    line-height: 30px;
    letter-spacing: .3px;
    color: #333;
}

.t-tag {
    font-size: 17px;
    line-height: 20px;
    letter-spacing: .3px;
    color: #777;
}

.t-body {
    font-size: 21px;
    line-height: 28px;
    letter-spacing: .2px;
    color: #444;
}

.t-a {
    right: 76px;
    top: 667px;
}

.t-b {
    right: 75px;
    top: 702px;
}

.t-c {
    right: 112px;
    top: 780px;
}

.t-d {
    right: 78px;
    top: 812px;
}

.t-e {
    right: 65px;
    top: 844px;
}

.t-f {
    right: 78px;
    top: 946px;
}

.t-g {
    right: 124px;
    top: 981px;
}

.t-h {
    right: 112px;
    top: 1027px;
}

.t-i {
    right: 38px;
    top: 1059px;
}

/* annotations */
.notes {
    position: absolute;
    left: 0;
    top: 0;
    width: 2560px;
    height: 1455px;
    fill: none;
    stroke: #f15a2f;
    stroke-width: 2;
}

.notes .solid {
    fill: #f15a2f;
    stroke: none;
}

.notes .spot {
    fill: #fdd9cf;
    stroke: none;
}

.notes .spot-dark {
    fill: #63413a;
    stroke: none;
}

.loupe {
    position: absolute;
    left: 796px;
    top: 331px;
    width: 364px;
    height: 364px;
    filter: drop-shadow(0 4px 14px rgba(0, 0, 0, .2));
}

/* contrast panel */
.contrast {
    position: absolute;
    left: 1169px;
    top: 92px;
    width: 802px;
    height: 117px;
    display: flex;
    align-items: center;
    background: #363636;
    border-radius: 6px;
    box-shadow: 0 10px 24px rgba(0, 0, 0, .35);
    font-family: "Open Sans", sans-serif;
}

.contrast-close {
    position: absolute;
    left: 16px;
    top: 10px;
    width: 25px;
    height: 25px;
    display: flex;
    align-items: center;
    justify-content: center;
    border-radius: 50%;
    background: #7a7a7a;
    font-size: 26px;
    line-height: 1;
    color: #333;
}

.grade {
    margin-left: 63px;
    width: 120px;
    font-size: 35px;
    font-weight: 700;
    letter-spacing: .3px;
    color: #9a9a9a;
}

.picker {
    width: 63px;
    height: 48px;
    display: flex;
    align-items: center;
    justify-content: center;
    background: #2b2b2b;
    border: 1px solid #242424;
    border-radius: 8px;
    flex: none;
}

.picker svg {
    width: 22px;
    height: 30px;
    fill: currentColor;
    stroke: currentColor;
}

.picker .tube {
    fill: none;
    stroke-width: 2;
}

.picker .bulb {
    stroke: none;
}

.picker-on {
    background: radial-gradient(circle, #5a5a5a 0, #2a2a2a 60%);
    color: #fff;
}

.picker-off {
    color: #b5b5b5;
}

.hex-ring {
    width: 140px;
    height: 64px;
    margin-left: 8px;
    display: flex;
    align-items: center;
    justify-content: center;
    background: #5e5e5e;
    border-radius: 14px;
    flex: none;
}

.hex {
    width: 123px;
    height: 47px;
    position: relative;
    display: flex;
    align-items: center;
    justify-content: center;
    background: #222;
    border-radius: 7px;
    font-size: 26px;
    color: #eee;
    flex: none;
}

.hex-active {
    background: #1e1e1e;
}

.caret {
    position: absolute;
    left: 16px;
    top: 8px;
    width: 2px;
    height: 31px;
    background: #ddd;
}

.swap {
    width: 27px;
    height: 18px;
    margin: 0 15px 0 7px;
    fill: #aaa;
    flex: none;
}

.hex-second {
    margin-left: 16px;
}

.ratio {
    margin-left: 55px;
    font-size: 28px;
    font-weight: 700;
    color: #8f8f8f;
}

/* right strip */
.strip {
    position: absolute;
    right: 0;
    top: 0;
    bottom: 0;
    width: 28px;
    background: #2a2a2a;
    border-left: 1px solid #3a3a3a;
}

.chev-wide {
    position: absolute;
    left: 8px;
    bottom: 12px;
    width: 12px;
    height: 12px;
    border-color: #777;
    border-width: 1.2px;
    transform: scaleY(.5) rotate(45deg);
}

/* tools */
.tools {
    position: absolute;
    left: 0;
    top: 0;
    width: 128px;
    height: 947px;
    background: #333;
    border-left: 2px solid #2a2a2a;
    box-shadow: 3px 3px 14px rgba(0, 0, 0, .25);
}

.panel-head {
    height: 21px;
    margin-left: -2px;
    display: flex;
    align-items: center;
    padding-left: 11px;
    background: #282828;
}

.dbl {
    width: 12px;
    height: 10px;
    background:
        linear-gradient(45deg, transparent 44%, #999 44% 56%, transparent 56%) 0 5px / 5px 5px no-repeat,
        linear-gradient(-45deg, transparent 44%, #999 44% 56%, transparent 56%) 0 0 / 5px 5px no-repeat,
        linear-gradient(45deg, transparent 44%, #999 44% 56%, transparent 56%) 7px 5px / 5px 5px no-repeat,
        linear-gradient(-45deg, transparent 44%, #999 44% 56%, transparent 56%) 7px 0 / 5px 5px no-repeat;
}

.grip {
    width: 34px;
    height: 7px;
    margin: 5px auto 0;
    background: repeating-linear-gradient(90deg, #1d1d1d 0 1.5px, transparent 1.5px 3.4px);
}

.grip-tools {
    height: 8px;
    margin: 5px 0 12px 44px;
}

.toolgroup {
    display: grid;
    grid-template-columns: 53px 53px;
    grid-auto-rows: 43px;
    width: 109px;
    padding: 4px 0 3px;
    border-bottom: 1px solid #3d3d3d;
    margin-left: 9px;
}

.tool {
    position: relative;
    display: flex;
    align-items: center;
    justify-content: center;
}

.tool svg {
    width: 34px;
    height: 34px;
    fill: none;
    stroke: #b2b2b2;
    stroke-width: 2;
}

.tool .f {
    fill: #b2b2b2;
    stroke: none;
}

.tool .thick {
    stroke-width: 3;
}

.tool .dim {
    fill: #4a4a4a;
    stroke: #c0c0c0;
}

.tool .cut {
    stroke: #333;
    stroke-width: 1.5;
}

.tool .dots {
    stroke-dasharray: 2 3;
}

.tool .dash {
    stroke-dasharray: 5 3;
    stroke-width: 2.5;
}

.tool .nostroke {
    stroke: none;
}

.tool .darkfill {
    fill: #4a4a4a;
    stroke: #b2b2b2;
}

.tool.more::after {
    content: "";
    position: absolute;
    right: 4px;
    bottom: 3px;
    border-left: 6px solid transparent;
    border-bottom: 6px solid #8c8c8c;
}

.tool-on {
    background: #1f1f1f;
    border: 1px solid #3d3d3d;
    border-radius: 4px;
}

.tool-on.more::after {
    border-bottom-color: #b2b2b2;
    right: 2px;
    bottom: 2px;
}

.tool-type {
    font: 700 35px/1 "Liberation Serif", serif;
    color: #b8b8b8;
}

.colors {
    position: relative;
    height: 110px;
}

.big-fill {
    position: absolute;
    left: 9px;
    top: 9px;
    width: 63px;
    height: 62px;
    background: #fff;
    border: 1px solid #111;
    z-index: 1;
}

.big-stroke {
    position: absolute;
    left: 42px;
    top: 42px;
    width: 62px;
    height: 61px;
    background: #000;
    border: 1px solid #fff;
    outline: 1px solid #111;
    display: flex;
    align-items: center;
    justify-content: center;
}

.big-stroke span {
    width: 33px;
    height: 32px;
    background: #333;
    border: 1.5px solid #fff;
    outline: 1px solid #000;
}

.color-swap {
    position: absolute;
    left: 88px;
    top: 12px;
    width: 22px;
    height: 22px;
    fill: none;
    stroke: #b5b5b5;
    stroke-width: 2;
}

.color-default {
    position: absolute;
    left: 9px;
    top: 80px;
    width: 22px;
    height: 22px;
}

.moderow {
    display: grid;
    grid-template-columns: 33px 35px 35px;
    width: 104px;
    margin-left: 9px;
    border: 1px solid #3c3c3c;
    border-radius: 4px;
}

.mode-color {
    height: 37px;
    margin-top: 5px;
}

.mode-draw {
    height: 33px;
    margin-top: 8px;
}

.modecell {
    display: flex;
    align-items: center;
    justify-content: center;
    border-left: 1px solid #3c3c3c;
}

.modecell-on {
    background: #262626;
    border-left: 0;
}

.modecell svg {
    width: 20px;
    height: 20px;
    fill: none;
    stroke: #c0c0c0;
    stroke-width: 2;
}

.modecell .f {
    fill: #c0c0c0;
    stroke: none;
}

.modecell .dk {
    fill: #333;
}

.modecell-dim svg {
    stroke: #5c5c5c;
}

.mode-chip {
    width: 23px;
    height: 23px;
    border: 1.5px solid #000;
    outline: 1px solid #000;
}

.chip-white {
    background: #fff;
}

.chip-grad {
    background: linear-gradient(90deg, #fff, #222);
}

.chip-none {
    background: linear-gradient(135deg, #fff 0 38%, #f00 38% 62%, #fff 62%);
}

.screenmode {
    width: 40px;
    height: 29px;
    margin: 15px 0 0 42px;
    background: #555;
    border: 2px solid #b5b5b5;
}

.screenmode svg {
    display: block;
    width: 100%;
    height: 100%;
    fill: none;
    stroke: #b5b5b5;
    stroke-width: 2;
}

/* docks */
.docks {
    position: absolute;
    right: 0;
    top: 0;
    width: 300px;
    height: 561px;
    background: #262626;
    box-shadow: -4px 3px 12px rgba(0, 0, 0, .25);
}

.dock-head {
    height: 22px;
    position: relative;
}

.dbl-a {
    position: absolute;
    left: 45px;
    top: 6px;
}

.dbl-b {
    position: absolute;
    left: 276px;
    top: 6px;
}

.dock-cols {
    display: flex;
    gap: 5px;
    height: 539px;
}

.dock-col {
    display: flex;
    flex-direction: column;
    gap: 2px;
}

.col-icons {
    width: 67px;
}

.col-named {
    width: 226px;
}

.dgroup {
    background: #333;
    padding-top: 3px;
    flex: none;
}

.dg-a {
    height: 120px;
}

.dg-b {
    height: 171px;
}

.dg-c {
    height: 171px;
}

.dg-d {
    height: 71px;
}

.dn-a {
    height: 71px;
}

.dn-b {
    height: 170px;
}

.dn-c {
    height: 171px;
}

.dn-d {
    height: 121px;
}

.dicon {
    height: 50px;
    display: flex;
    align-items: center;
    justify-content: center;
}

.col-icons .dgroup > .dicon:nth-child(2) {
    margin-top: 1px;
}

.dicon svg {
    width: 34px;
    height: 30px;
}

.dg-a .di-first svg {
    width: 36px;
}

.dicon.di-next svg {
    height: 36px;
}

.ditem {
    height: 50px;
    display: flex;
    align-items: center;
    font-size: 18.5px;
    font-weight: 600;
    letter-spacing: .15px;
    color: #dcdcdc;
    white-space: nowrap;
}

.ditem-first {
    margin-top: 1px;
}

.ditem svg {
    width: 38px;
    height: 32px;
    margin-left: 16px;
    margin-right: 12px;
    flex: none;
    fill: none;
    stroke: #b5b5b5;
    stroke-width: 2;
}

.ditem .f {
    fill: #b5b5b5;
    stroke: none;
}

.ditem .cut-in {
    stroke: #333;
    stroke-width: 1.5;
}

.ditem .info-i {
    stroke: #b5b5b5;
    stroke-width: 3;
}

/* status bar */
.statusbar {
    height: 28px;
    flex: none;
    display: flex;
    position: relative;
    background: #303030;
    border-top: 1px solid #242424;
    font-size: 19px;
    overflow: hidden;
    align-items: flex-start;
}

.zoom-combo {
    width: 121px;
    height: 30px;
    margin-left: 7px;
    justify-content: space-between;
    border-top: 0;
}

.page-combo {
    width: 102px;
    height: 30px;
    margin-left: 18px;
    justify-content: space-between;
    border-top: 0;
}

.statusbar .field {
    padding-top: 2px;
    padding-left: 7px;
    color: #b0b0b0;
}

.statusbar .arrow {
    padding-top: 2px;
}

.pager {
    height: 16px;
    margin-top: 5px;
    fill: #aaa;
    flex: none;
}

.pg-first {
    width: 16px;
    margin-left: 15px;
}

.pg-prev {
    width: 10px;
    margin-left: 18px;
}

.pg-next {
    width: 10px;
    margin-left: 18px;
    fill: #555;
}

.pg-last {
    width: 16px;
    margin-left: 17px;
    fill: #555;
}

.toggle-sel {
    position: absolute;
    left: 487px;
    top: 3px;
    color: #aaa;
    font-size: 18.5px;
    line-height: 26px;
    white-space: nowrap;
}

.toggle-play {
    position: absolute;
    left: 735px;
    top: 0;
    width: 33px;
    height: 28px;
    display: flex;
    align-items: center;
    justify-content: center;
    border-left: 1px solid #444;
    background: #2b2b2b;
}

.toggle-play svg {
    width: 10px;
    height: 16px;
    fill: #b5b5b5;
}

.chev-left {
    position: absolute;
    left: 780px;
    top: 9px;
    width: 9px;
    height: 9px;
    border-color: #666;
    transform: rotate(135deg);
}

.h-thumb {
    position: absolute;
    left: 1015px;
    top: 3px;
    width: 45px;
    height: 30px;
    background: #464646;
    border-radius: 15px;
}

.chev-end {
    position: absolute;
    left: 2509px;
    top: 9px;
    width: 9px;
    height: 9px;
    border-color: #666;
}

.corner {
    position: absolute;
    right: 0;
    top: 0;
    width: 28px;
    height: 28px;
    background: #3a3a3a;
}
```
